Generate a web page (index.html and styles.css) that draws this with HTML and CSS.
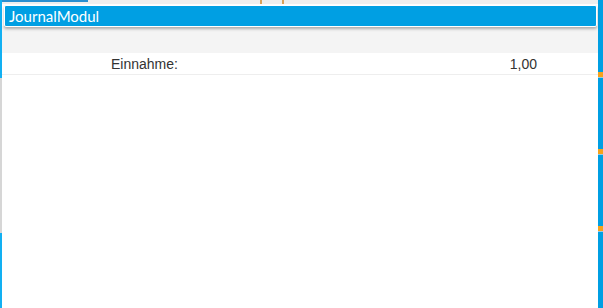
FILE: index.html
```html
<!DOCTYPE html>
<html lang="de">
<head>
    <meta charset="UTF-8">
    <title>JournalModul</title>
    <link rel="stylesheet" href="styles.css">
</head>
<body>
    <div class="frame">
        <div class="edge-left">
            <div class="seg seg-blue" style="height: 78px"></div>
            <div class="seg seg-gray" style="height: 155px"></div>
            <div class="seg seg-blue seg-fill"></div>
        </div>

        <div class="main">
            <div class="topstrip">
                <div class="tab-mark"></div>
                <div class="dot dot-a"></div>
                <div class="dot dot-b"></div>
            </div>
            <div class="header">JournalModul</div>
            <div class="toolbar"></div>
            <div class="row">
                <span class="row-label">Einnahme:</span>
                <span class="row-value">1,00</span>
            </div>
        </div>

        <div class="edge-right">
            <div class="seg seg-dark" style="height: 72px"></div>
            <div class="mark"></div>
            <div class="seg seg-dark" style="height: 71px"></div>
            <div class="mark"></div>
            <div class="seg seg-dark" style="height: 71px"></div>
            <div class="mark"></div>
            <div class="seg seg-dark seg-fill"></div>
        </div>
    </div>
</body>
</html>
```

FILE: styles.css
```css
* { margin: 0; padding: 0; box-sizing: border-box; }
html, body { height: 100%; }
body { font-family: "Liberation Sans", Arial, sans-serif; background: #fff; color: #333; overflow: hidden; }

.frame { display: flex; height: 308px; }

.edge-left { width: 2px; display: flex; flex-direction: column; }
.edge-right { width: 5px; display: flex; flex-direction: column; }
.seg { width: 100%; }
.seg-fill { flex: 1; }
.seg-blue { background: #12b0f2; }
.seg-gray { background: #d6d6d6; }
.seg-dark { background: #009fe3; }
.mark { height: 6px; background: #f7a21b; border-bottom: 1px solid #9fc9e0; }

.main { flex: 1; display: flex; flex-direction: column; }

.topstrip { height: 4px; background: #eeeeee; display: flex; position: relative; }
.tab-mark { width: 86px; height: 2px; background: #2a8fd0; }
.dot { position: absolute; top: 0; width: 2px; height: 4px; background: #d9a25a; }
.dot-a { left: 258px; }
.dot-b { left: 280px; }

.header {
    margin: 1px 1px 0 2px;
    height: 22px;
    padding: 0 4px;
    background: #009fe3;
    border: 1px solid #ffffff;
    border-radius: 2px;
    box-shadow: 0 2px 3px rgba(0,0,0,0.3);
    color: #fff;
    font-family: Lato, "Open Sans", sans-serif;
    font-size: 15px;
    line-height: 20px;
    position: relative;
    z-index: 1;
}

.toolbar { height: 27px; background: #f4f4f4; margin-top: -1px; }

.row {
    height: 22px;
    display: flex;
    align-items: center;
    padding-left: 109px;
    border-bottom: 1px solid #eeeeee;
    font-size: 14px;
}
.row-label { flex: 1; }
.row-value { width: 80px; margin-right: 61px; text-align: right; }
```
